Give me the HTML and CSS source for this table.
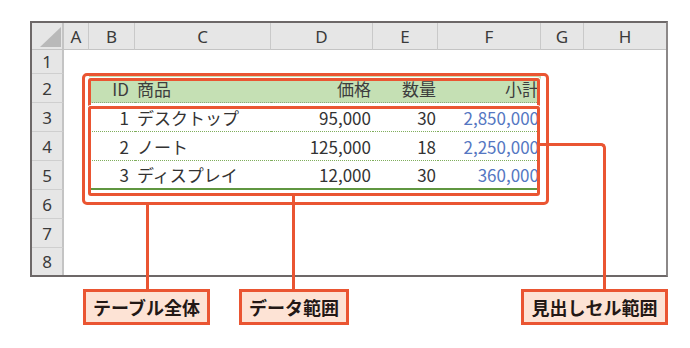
FILE: index.html
```html
<!DOCTYPE html>
<html lang="ja">
<head>
<meta charset="utf-8">
<link rel="stylesheet" href="styles.css">
</head>
<body>
<div class="stage">
  <div class="sheet">
    <div class="corner"><svg width="32" height="27" viewBox="0 0 32 27"><polygon points="8,24 29,24 29,4" fill="#b9b9b9"/></svg></div>
    <div class="ch">A</div><div class="ch">B</div><div class="ch">C</div><div class="ch">D</div><div class="ch">E</div><div class="ch">F</div><div class="ch">G</div><div class="ch ch-last">H</div>

    <div class="rh">1</div><div class="c"></div><div class="c"></div><div class="c"></div><div class="c"></div><div class="c"></div><div class="c"></div><div class="c"></div><div class="c"></div>

    <div class="rh">2</div><div class="c"></div>
    <div class="c th r id">ID</div><div class="c th">商品</div><div class="c th r">価格</div><div class="c th r">数量</div><div class="c th r">小計</div>
    <div class="c"></div><div class="c"></div>

    <div class="rh">3</div><div class="c"></div>
    <div class="c td r id">1</div><div class="c td">デスクトップ</div><div class="c td r">95,000</div><div class="c td r">30</div><div class="c td r blue">2,850,000</div>
    <div class="c"></div><div class="c"></div>

    <div class="rh">4</div><div class="c"></div>
    <div class="c td r id">2</div><div class="c td">ノート</div><div class="c td r">125,000</div><div class="c td r">18</div><div class="c td r blue">2,250,000</div>
    <div class="c"></div><div class="c"></div>

    <div class="rh">5</div><div class="c"></div>
    <div class="c td last r id">3</div><div class="c td last">ディスプレイ</div><div class="c td last r">12,000</div><div class="c td last r">30</div><div class="c td last r blue end">360,000<span class="handle"></span></div>
    <div class="c"></div><div class="c"></div>

    <div class="rh">6</div><div class="c"></div><div class="c"></div><div class="c"></div><div class="c"></div><div class="c"></div><div class="c"></div><div class="c"></div><div class="c"></div>
    <div class="rh">7</div><div class="c"></div><div class="c"></div><div class="c"></div><div class="c"></div><div class="c"></div><div class="c"></div><div class="c"></div><div class="c"></div>
    <div class="rh rh-last">8</div><div class="c"></div><div class="c"></div><div class="c"></div><div class="c"></div><div class="c"></div><div class="c"></div><div class="c"></div><div class="c"></div>
  </div>

  <div class="labels">
    <div class="label l1">テーブル全体</div>
    <div class="label l2">データ範囲</div>
    <div class="label l3">見出しセル範囲</div>
  </div>

  <div class="frame frame-outer"></div>
  <div class="frame frame-head"></div>
  <div class="frame frame-data"></div>
  <div class="wire wire-1"></div>
  <div class="wire wire-2"></div>
  <div class="wire wire-3"></div>
</div>
</body>
</html>
```

FILE: styles.css
```css
html, body {
  margin: 0;
  padding: 0;
  background: #ffffff;
}

.stage {
  position: relative;
  width: 690px;
  height: 348px;
  overflow: hidden;
  font-family: "Noto Sans CJK JP", "Noto Sans", sans-serif;
}

.sheet {
  margin: 21px 0 0 30px;
  width: 638px;
  box-sizing: border-box;
  border: 2px solid #6d6868;
  border-right-color: #8c8888;
  display: grid;
  grid-template-columns: 32px 25px 46px 136px 102px 65px 103px 43px 82px;
  grid-template-rows: 27px 24px 29px 29px 29px 29px 29px 29px 27px;
  background: #ffffff;
}

.corner {
  background: #e6e6e6;
  border-right: 2px solid #c4c4c4;
  border-bottom: 1px solid #c4c4c4;
  box-sizing: border-box;
  line-height: 0;
}

.corner svg {
  display: block;
}

.ch {
  background: #e6e6e6;
  border-right: 1px solid #c9c9c9;
  border-bottom: 1px solid #c4c4c4;
  box-sizing: border-box;
  display: flex;
  align-items: center;
  justify-content: center;
  font-family: "Noto Sans", "Noto Sans CJK JP", sans-serif;
  font-size: 17px;
  color: #3a3a3a;
}

.ch-last {
  border-right: none;
}

.rh {
  background: #e6e6e6;
  border-right: 2px solid #c4c4c4;
  border-bottom: 1px solid #cfcfcf;
  box-sizing: border-box;
  display: flex;
  align-items: center;
  justify-content: center;
  font-family: "Noto Sans", "Noto Sans CJK JP", sans-serif;
  font-size: 17px;
  color: #3a3a3a;
}

.rh-last {
  border-bottom: none;
}

.c {
  box-sizing: border-box;
  display: flex;
  align-items: center;
  min-width: 0;
  white-space: nowrap;
  font-size: 17px;
  color: #333333;
  padding: 0 2px;
}

.c.r {
  justify-content: flex-end;
  padding-right: 2px;
}

.c.r.id {
  padding-right: 6px;
}

.th {
  background: #c5e0b4;
  color: #3d3d3d;
  border-bottom: 1px dotted #8aa77a;
}

.td {
  border-bottom: 1px dotted #7fae5c;
}

.td.last {
  border-bottom: 2px solid #5f9640;
}

.blue {
  color: #5577c2;
}

.end {
  position: relative;
}

.handle {
  position: absolute;
  right: 1px;
  bottom: -1px;
  width: 3px;
  height: 3px;
  background: #3a58a0;
}

.labels {
  display: flex;
  margin: 12px 0 0 83px;
  width: 585px;
}

.label {
  box-sizing: border-box;
  height: 36px;
  border: 3px solid #ea5532;
  background: #fde3d5;
  display: flex;
  align-items: center;
  justify-content: center;
  font-size: 18px;
  font-weight: 700;
  color: #231815;
}

.l1 { width: 127px; }
.l2 { width: 110px; margin-left: 29px; }
.l3 { width: 147px; margin-left: auto; }

.frame {
  position: absolute;
  box-sizing: border-box;
  border: 3px solid #ea5532;
  box-shadow: 0 0 0 1px #ffffff;
}

.frame-outer {
  left: 82px;
  top: 73px;
  width: 467px;
  height: 132px;
  border-radius: 5px;
}

.frame-head {
  left: 88px;
  top: 78px;
  width: 452px;
  height: 31px;
  border-radius: 3px;
}

.frame-data {
  left: 88px;
  top: 106px;
  width: 452px;
  height: 90px;
  border-radius: 3px;
}

.wire {
  position: absolute;
  box-sizing: border-box;
}

.wire-1 {
  left: 146px;
  top: 205px;
  width: 3px;
  height: 84px;
  background: #ea5532;
}

.wire-2 {
  left: 292px;
  top: 196px;
  width: 3px;
  height: 93px;
  background: #ea5532;
}

.wire-3 {
  left: 540px;
  top: 143px;
  width: 66px;
  height: 146px;
  border-top: 3px solid #ea5532;
  border-right: 3px solid #ea5532;
  border-top-right-radius: 5px;
}
```
